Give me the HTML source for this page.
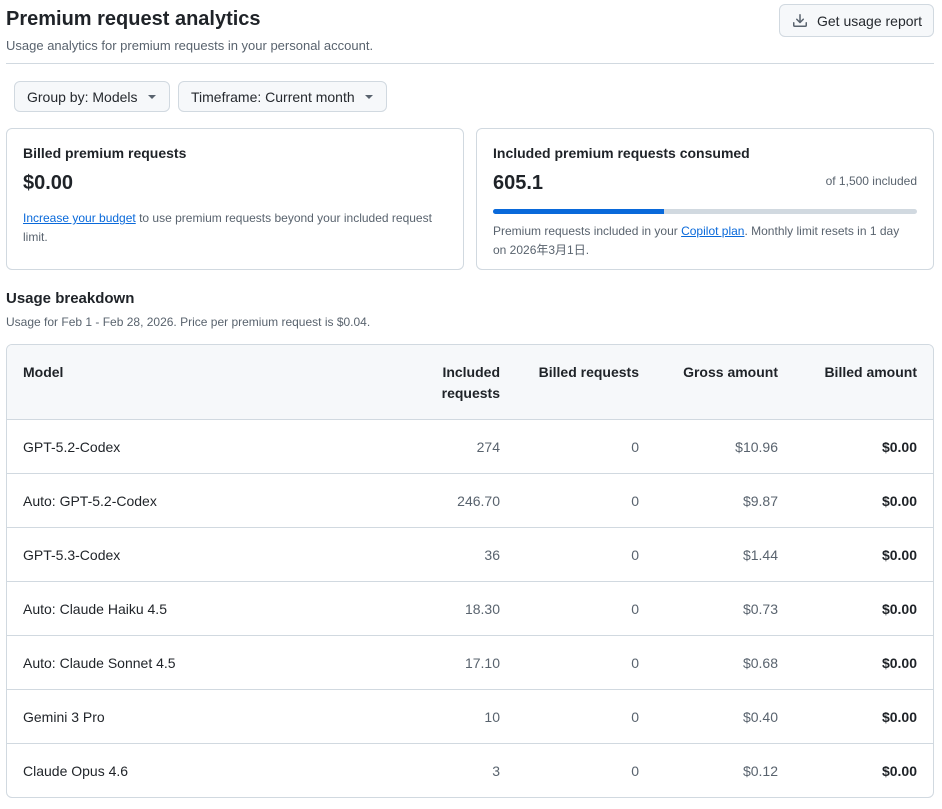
<!DOCTYPE html>
<html><head><meta charset="utf-8"><style>
*{box-sizing:border-box;margin:0;padding:0}
body{width:942px;height:809px;background:#fff;font-family:"Liberation Sans","Noto Sans CJK JP",sans-serif;color:#1f2328;position:relative;overflow:hidden}
.abs{position:absolute}
h1{position:absolute;left:6px;top:8px;font-size:20px;font-weight:600}
.sub{left:6px;top:38px;font-size:13px;color:#59636e}
.btn{border:1px solid #d1d9e0;background:#f6f8fa;border-radius:6px;font-size:14px;color:#25292e;display:flex;align-items:center}
.caret{display:inline-block;width:0;height:0;border-left:4px solid transparent;border-right:4px solid transparent;border-top:4px solid #59636e;margin-left:10px}
.card{border:1px solid #d1d9e0;border-radius:6px;position:absolute}
a{color:#0969da;text-decoration:underline}
table{position:absolute;left:6px;top:344px;width:928px;table-layout:fixed;border-collapse:separate;border-spacing:0;border:1px solid #d1d9e0;border-radius:6px;font-size:14px;overflow:hidden}
th{background:#f6f8fa;font-weight:600;text-align:right;vertical-align:top;padding:17px 16px 0;height:75px;border-bottom:1px solid #d1d9e0;line-height:21px}
td{height:54px;border-top:1px solid #d1d9e0;text-align:right;padding:0 16px;color:#59636e}
tr:nth-child(2) td{border-top:none;height:53px}
td:first-child,th:first-child{text-align:left;color:#1f2328}
td:last-child{font-weight:700;color:#1f2328}
</style></head><body>
<h1>Premium request analytics</h1>
<div class="abs sub">Usage analytics for premium requests in your personal account.</div>
<div class="abs btn" style="left:779px;top:4px;width:155px;height:33px;padding-left:12px">
<svg width="16" height="16" viewBox="0 0 16 16" fill="#59636e"><path d="M2.75 14A1.75 1.75 0 0 1 1 12.25v-2.5a.75.75 0 0 1 1.5 0v2.5c0 .14.11.25.25.25h10.5a.25.25 0 0 0 .25-.25v-2.5a.75.75 0 0 1 1.5 0v2.5A1.75 1.75 0 0 1 13.25 14Z"/><path d="M7.25 7.69V1.75a.75.75 0 0 1 1.5 0v5.94l1.97-1.970a.75.75 0 1 1 1.06 1.06l-3.25 3.25a.75.75 0 0 1-1.060 0L4.22 6.78a.75.75 0 0 1 1.06-1.06Z"/></svg>
<span style="margin-left:9px">Get usage report</span></div>
<div class="abs" style="left:6px;top:63px;width:928px;height:1px;background:#d1d9e0"></div>
<div class="abs btn" style="left:14px;top:81px;width:156px;height:31px;padding-left:12px">Group by: Models<span class="caret"></span></div>
<div class="abs btn" style="left:178px;top:81px;width:209px;height:31px;padding-left:12px">Timeframe: Current month<span class="caret"></span></div>
<div class="card" style="left:6px;top:128px;width:458px;height:142px">
<div class="abs" style="left:16px;top:16px;font-size:14px;font-weight:600">Billed premium requests</div>
<div class="abs" style="left:16px;top:43px;font-size:20px;font-weight:600">$0.00</div>
<div class="abs" style="left:16px;top:80px;font-size:12px;color:#59636e;line-height:19px;width:420px"><a>Increase your budget</a> to use premium requests beyond your included request limit.</div>
</div>
<div class="card" style="left:476px;top:128px;width:458px;height:142px">
<div class="abs" style="left:16px;top:16px;font-size:14px;font-weight:600">Included premium requests consumed</div>
<div class="abs" style="left:16px;top:43px;font-size:20px;font-weight:600">605.1</div>
<div class="abs" style="right:16px;top:45px;font-size:12px;color:#59636e">of 1,500 included</div>
<div class="abs" style="left:16px;top:80px;width:424px;height:5px;background:#d1d9e0;border-radius:3px"><div style="width:171px;height:5px;background:#0969da;border-radius:3px 0 0 3px"></div></div>
<div class="abs" style="left:16px;top:93px;font-size:12px;color:#59636e;line-height:19px;width:420px">Premium requests included in your <a>Copilot plan</a>. Monthly limit resets in 1 day on 2026年3月1日.</div>
</div>
<div class="abs" style="left:6px;top:290px;font-size:15px;font-weight:600">Usage breakdown</div>
<div class="abs" style="left:6px;top:315px;font-size:12px;color:#59636e">Usage for Feb 1 - Feb 28, 2026. Price per premium request is $0.04.</div>
<table>
<colgroup><col style="width:370px"><col style="width:139px"><col style="width:139px"><col style="width:139px"><col style="width:139px"></colgroup>
<tr><th>Model</th><th>Included<br>requests</th><th>Billed requests</th><th>Gross amount</th><th>Billed amount</th></tr>
<tr><td>GPT-5.2-Codex</td><td>274</td><td>0</td><td>$10.96</td><td>$0.00</td></tr>
<tr><td>Auto: GPT-5.2-Codex</td><td>246.70</td><td>0</td><td>$9.87</td><td>$0.00</td></tr>
<tr><td>GPT-5.3-Codex</td><td>36</td><td>0</td><td>$1.44</td><td>$0.00</td></tr>
<tr><td>Auto: Claude Haiku 4.5</td><td>18.30</td><td>0</td><td>$0.73</td><td>$0.00</td></tr>
<tr><td>Auto: Claude Sonnet 4.5</td><td>17.10</td><td>0</td><td>$0.68</td><td>$0.00</td></tr>
<tr><td>Gemini 3 Pro</td><td>10</td><td>0</td><td>$0.40</td><td>$0.00</td></tr>
<tr><td>Claude Opus 4.6</td><td>3</td><td>0</td><td>$0.12</td><td>$0.00</td></tr>
</table>
</body></html>
